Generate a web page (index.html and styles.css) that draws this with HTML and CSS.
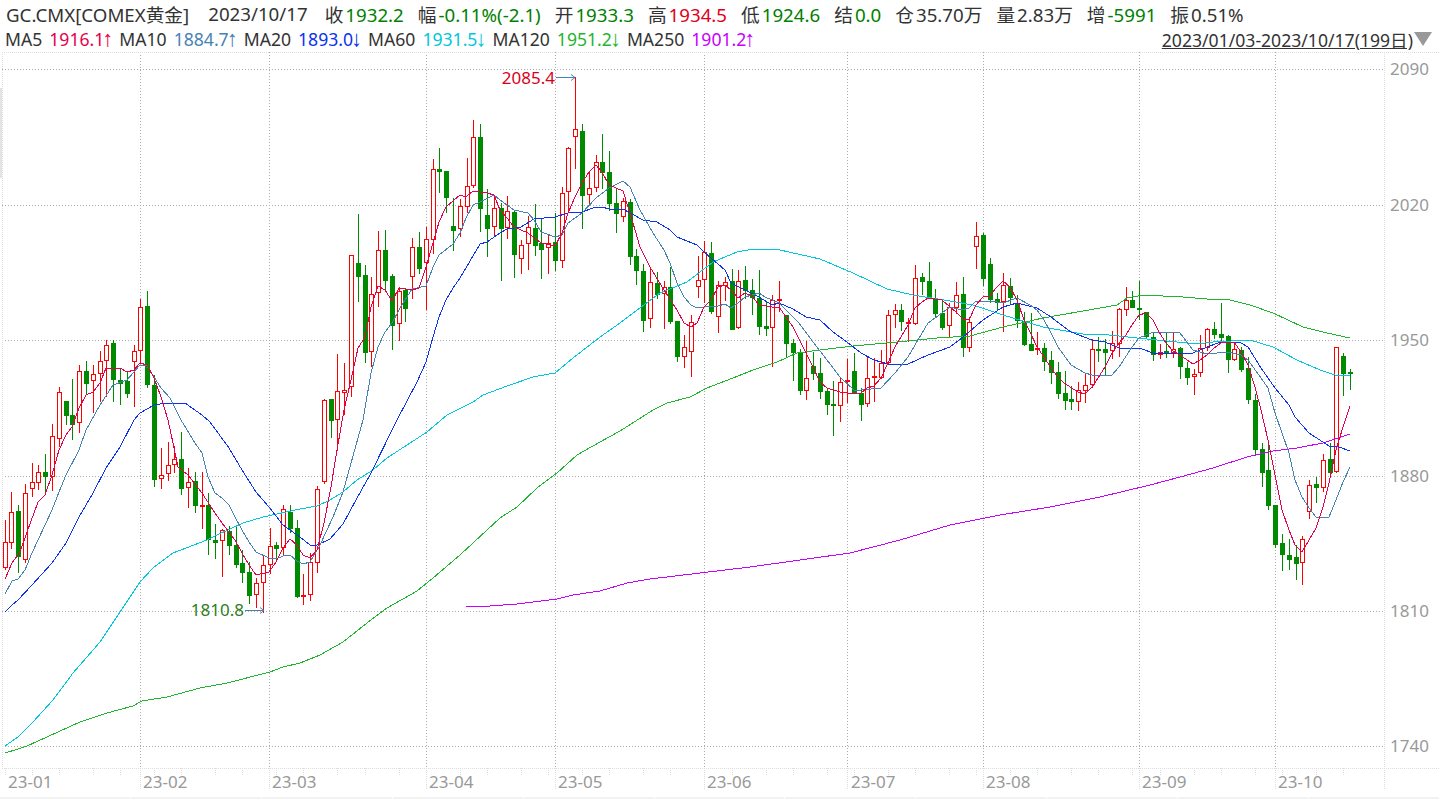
FILE: index.html
```html
<!DOCTYPE html>
<html lang="zh-CN">
<head>
    <meta charset="UTF-8">
    <title>GC.CMX COMEX黄金 日K</title>
    <link rel="stylesheet" href="styles.css">
</head>
<body>
    <div class="quote-row">
        <span class="stat-name">GC.CMX[COMEX黄金]</span>
        <span class="stat-date">2023/10/17</span>
        <span class="stat">收<span class="down">1932.2</span></span>
        <span class="stat">幅<span class="down">-0.11%(-2.1)</span></span>
        <span class="stat">开<span class="down">1933.3</span></span>
        <span class="stat">高<span class="up">1934.5</span></span>
        <span class="stat">低<span class="down">1924.6</span></span>
        <span class="stat">结<span class="down">0.0</span></span>
        <span class="stat">仓<span>35.70万</span></span>
        <span class="stat">量<span>2.83万</span></span>
        <span class="stat">增<span class="down">-5991</span></span>
        <span class="stat">振<span>0.51%</span></span>
    </div>
    <div class="ma-row">
        <span class="ma">MA5<span class="ma5">1916.1<i>↑</i></span></span>
        <span class="ma">MA10<span class="ma10">1884.7<i>↑</i></span></span>
        <span class="ma">MA20<span class="ma20">1893.0<i>↓</i></span></span>
        <span class="ma">MA60<span class="ma60">1931.5<i>↓</i></span></span>
        <span class="ma">MA120<span class="ma120">1951.2<i>↓</i></span></span>
        <span class="ma">MA250<span class="ma250">1901.2<i>↑</i></span></span>
        <span class="range">2023/01/03-2023/10/17(199日)</span>
        <span class="range-caret"></span>
    </div>

    <div class="chart-wrap">
        <div class="side-handle"></div>
        <svg id="chart" class="chart" viewBox="0 52 1439 745" width="1439" height="745">
            <g id="grid"></g>
            <g id="candles"></g>
            <g id="lines"></g>

            <text class="low-label" x="244" y="616" text-anchor="end">1810.8</text>
            <text class="high-label" x="555" y="84" text-anchor="end">2085.4</text>
            <path class="pointer" d="M245 610.5H264M260 607.5L264 610.5L260 613.5"/>
            <path class="pointer" d="M556 77.5H575M571 74.5L575 77.5L571 80.5"/>

            <text class="axis-label" x="1390" y="75">2090</text>
            <text class="axis-label" x="1390" y="211">2020</text>
            <text class="axis-label" x="1390" y="346">1950</text>
            <text class="axis-label" x="1390" y="482">1880</text>
            <text class="axis-label" x="1390" y="617">1810</text>
            <text class="axis-label" x="1390" y="752">1740</text>

            <text class="axis-label" x="8" y="788">23-01</text>
            <text class="axis-label" x="143" y="788">23-02</text>
            <text class="axis-label" x="272" y="788">23-03</text>
            <text class="axis-label" x="429" y="788">23-04</text>
            <text class="axis-label" x="558" y="788">23-05</text>
            <text class="axis-label" x="707" y="788">23-06</text>
            <text class="axis-label" x="851" y="788">23-07</text>
            <text class="axis-label" x="986" y="788">23-08</text>
            <text class="axis-label" x="1142" y="788">23-09</text>
            <text class="axis-label" x="1278" y="788">23-10</text>
        </svg>
    </div>

    <div class="foot-strip">
        <span></span><span></span><span></span><span></span><span></span><span></span><span></span><span></span><span></span><span></span><span></span>
    </div>

    <script src="app.js"></script>
</body>
</html>
```

FILE: styles.css
```css
html, body {
    margin: 0;
    padding: 0;
    overflow: hidden;
    background: #fff;
}
body {
    font-family: "Noto Sans", "Noto Sans CJK SC", sans-serif;
    color: #333;
    width: 1439px;
    height: 799px;
}

.quote-row, .ma-row {
    display: flex;
    align-items: center;
    height: 26px;
    white-space: nowrap;
}
.quote-row {
    gap: 14px;
    padding-left: 6px;
    font-size: 18.7px;
}
.ma-row {
    gap: 8px;
    padding-left: 5px;
    font-size: 17.6px;
}
.stat-date {
    margin: 0 3px 0 5px;
}
.stat span {
    margin-left: 2px;
}
.up {
    color: #e0001a;
}
.down {
    color: #008000;
}

.ma span {
    margin-left: 7px;
}
.ma i {
    display: inline-block;
    width: 7px;
    font-family: "Liberation Sans", sans-serif;
    font-size: 22px;
    font-style: normal;
    line-height: 1;
    text-indent: -2px;
}
.ma5 { color: #e6004c; }
.ma10 { color: #4682b4; }
.ma20 { color: #0a32f0; }
.ma60 { color: #00c8dc; }
.ma120 { color: #1fb52f; }
.ma250 { color: #c800ff; }

.range {
    margin-left: auto;
    text-decoration: underline;
}
.range-caret {
    width: 0;
    height: 0;
    margin: 0 7px 0 -7px;
    border-left: 9px solid transparent;
    border-right: 9px solid transparent;
    border-top: 14px solid #999;
}

.chart-wrap {
    position: relative;
    height: 745px;
}
.side-handle {
    position: absolute;
    left: 0;
    top: 36px;
    width: 2px;
    height: 90px;
    background: #e4e4e4;
}
.chart {
    display: block;
}
.chart text {
    font-family: "Noto Sans", sans-serif;
    font-size: 17px;
}
.axis-label {
    fill: #999;
}
.high-label {
    fill: #d9001b;
}
.low-label {
    fill: #2e7d1e;
}
.pointer {
    fill: none;
    stroke: #4682b4;
    stroke-width: 1;
}
.grid-line {
    stroke: #aaa;
    stroke-width: 1;
    stroke-dasharray: 1 2;
}
.frame-line {
    stroke: #ddd;
    stroke-width: 1;
    stroke-dasharray: 1 1;
}
.wick-up, .body-up {
    stroke: #f00;
    stroke-width: 1;
}
.body-up {
    fill: #fff;
}
.wick-down {
    stroke: #008a00;
    stroke-width: 1;
}
.body-down {
    fill: #008a00;
}
.ma-line {
    fill: none;
    stroke-width: 1;
    stroke-linejoin: round;
}
.line-ma5 { stroke: #e6004c; }
.line-ma10 { stroke: #4682b4; }
.line-ma20 { stroke: #0a32f0; }
.line-ma60 { stroke: #00c8dc; }
.line-ma120 { stroke: #1fb52f; }
.line-ma250 { stroke: #c800ff; }

.foot-strip {
    display: flex;
    gap: 1px;
    height: 2px;
}
.foot-strip span {
    flex: 1;
    background: #f2f2f2;
}
```

FILE: app.js
```js
const NS = 'http://www.w3.org/2000/svg';

// 蜡烛图数据: 方向(u涨 d跌), 影线上, 影线下, 实体上, 实体下 (屏幕y坐标)
const candles = [
    ['u',520,569,542,567],['u',492,548,512,542],['d',505,572,511,556],['u',484,562,493,559],['u',463,496,482,488],
    ['u',465,489,472,482],['d',454,493,472,476],['u',424,490,436,476],['u',387,446,392,438],['d',401,424,401,415],
    ['d',379,439,415,424],['u',365,432,371,422],['d',361,394,371,383],['u',365,412,374,380],['u',351,401,361,373],
    ['u',340,396,345,360],['d',340,401,343,379],['d',368,404,380,383],['d',372,397,381,393],['u',345,406,351,361],
    ['u',299,363,307,350],['d',291,387,306,384],['d',375,486,385,479],['u',448,488,475,478],['u',442,480,465,473],
    ['u',446,472,459,464],['d',432,494,459,488],['u',468,507,482,487],['d',472,512,481,505],['u',472,528,505,506],
    ['d',493,554,505,539],['d',524,558,540,542],['u',529,576,530,540],['d',526,554,531,545],['d',526,567,545,564],
    ['d',550,582,563,572],['d',562,603,572,595],['u',578,607,583,594],['u',555,612,565,582],['u',528,573,546,564],
    ['d',542,559,545,548],['u',505,554,509,547],['d',505,532,512,528],['d',520,597,528,596],['u',574,604,595,596],
    ['u',553,600,562,594],['u',486,572,489,562],['u',399,483,400,481],['d',399,437,399,420],['u',354,450,391,419],
    ['u',363,414,390,392],['u',255,396,255,386],['d',214,301,263,276],['d',265,362,275,352],['u',277,366,294,351],
    ['u',231,306,250,292],['d',230,291,250,280],['d',274,349,276,325],['u',287,340,291,323],['d',289,321,290,308],
    ['u',238,298,247,276],['d',232,273,247,268],['u',227,309,239,262],['u',159,253,169,239],['d',148,192,169,171],
    ['d',171,212,171,197],['d',198,250,226,230],['u',199,236,206,228],['u',158,212,186,206],['u',120,187,137,185],
    ['d',124,231,137,208],['d',189,256,215,228],['u',196,236,208,226],['d',203,280,208,228],['u',196,238,211,227],
    ['d',210,277,212,254],['u',240,273,245,258],['u',216,269,227,243],['d',204,255,228,245],['d',218,278,243,249],
    ['u',235,273,243,247],['d',213,270,242,260],['u',187,267,193,260],['u',147,212,148,191],['u',77,168,129,136],
    ['d',124,228,131,195],['u',172,203,188,194],['u',155,191,162,187],['d',134,188,162,172],['d',151,210,172,203],
    ['d',189,232,203,213],['u',198,221,201,216],['d',199,264,202,256],['d',249,284,256,270],['d',264,331,271,320],
    ['u',267,327,282,318],['d',272,298,283,294],['u',281,328,287,293],['d',267,323,287,321],['d',321,361,321,356],
    ['u',335,367,347,356],['u',315,376,322,351],['u',256,297,280,286],['u',241,302,252,279],['d',242,313,253,311],
    ['u',281,332,285,316],['u',277,300,282,285],['d',269,329,281,329],['u',270,328,281,327],['d',266,298,280,290],
    ['d',279,314,290,297],['d',270,334,298,326],['d',301,335,326,328],['u',295,366,300,327],['u',281,311,299,300],
    ['d',315,357,315,343],['d',339,380,343,352],['d',349,394,352,390],['u',341,399,378,390],['d',352,379,366,373],
    ['d',358,398,373,391],['d',388,414,391,404],['d',381,435,404,405],['u',378,421,382,405],['u',359,402,380,381],
    ['d',353,392,371,392],['d',388,420,393,404],['u',357,406,378,403],['u',358,401,376,377],['u',350,378,363,377],
    ['u',310,363,315,362],['u',304,327,310,314],['d',304,330,310,321],['u',318,341,322,323],['u',265,324,278,323],
    ['d',273,294,277,281],['d',262,298,281,297],['d',289,316,298,313],['d',300,329,313,327],['u',303,336,307,325],
    ['u',282,313,295,307],['d',277,356,294,347],['u',317,351,322,347],['u',222,268,236,246],['d',233,285,235,278],
    ['d',258,302,264,299],['d',293,310,299,302],['u',273,331,285,301],['d',278,303,286,297],['d',295,327,303,320],
    ['d',312,345,321,344],['d',313,350,344,350],['u',332,354,348,349],['d',343,370,348,361],['d',351,383,360,372],
    ['d',362,398,372,393],['d',371,409,393,400],['d',386,409,399,401],['u',382,410,390,401],['u',373,402,385,390],
    ['u',339,387,349,384],['d',337,361,349,350],['d',339,375,349,352],['u',331,358,343,350],['u',308,356,309,343],
    ['u',287,315,300,309],['d',291,307,300,307],['d',281,319,308,309],['d',312,337,312,336],['d',332,360,337,354],
    ['u',344,358,352,354],['d',333,357,351,353],['u',332,357,349,352],['d',347,378,348,366],['d',362,384,368,377],
    ['u',369,394,374,376],['u',335,376,348,372],['u',328,350,329,347],['d',322,338,329,334],['d',303,342,334,337],
    ['d',335,372,336,359],['u',342,360,349,359],['d',347,371,350,369],['d',357,403,368,399],['d',394,455,400,449],
    ['d',443,486,449,472],['d',443,509,470,505],['d',505,547,505,544],['d',534,570,543,554],['d',539,569,555,559],
    ['d',545,579,557,563],['u',536,584,539,562],['u',480,518,485,511],['d',477,502,484,487],['u',454,491,460,487],
    ['d',443,474,459,472],['u',347,472,347,471],['d',353,395,356,373],['d',369,389,372,373]
];

const maLines = {
    ma250: '466,607 490,606 517,604 557,599 573,595 600,591 627,583 650,579 700,573 750,567 800,560 850,553 900,540 950,525 1000,515 1050,507 1100,497 1150,485 1180,477 1213,468 1247,457 1273,451 1297,448 1323,443 1350,434',
    ma120: '5,753 18,749 27,746 80,722 107,713 133,706 142,701 167,697 200,688 227,683 270,672 283,667 300,663 320,655 343,642 367,623 387,608 417,591 433,578 460,555 500,518 517,507 537,488 557,473 577,455 600,442 620,431 653,410 667,403 690,397 707,388 733,378 753,370 777,362 797,353 820,350 853,346 897,342 937,338 970,336 1003,327 1043,318 1083,311 1117,305 1127,298 1143,295 1163,296 1183,297 1207,299 1230,300 1250,305 1273,313 1303,327 1327,333 1350,338',
    ma60: '5,746 18,737 33,722 53,700 73,673 100,642 120,612 140,582 153,568 173,553 207,540 217,535 243,523 263,517 300,509 317,506 330,500 343,492 357,480 373,470 387,458 407,445 427,432 447,415 473,402 483,395 507,386 533,377 555,373 573,358 600,337 620,323 640,308 660,293 687,282 713,262 737,252 753,249 780,250 820,259 853,273 887,289 913,295 950,301 973,305 1003,315 1043,327 1083,334 1100,334 1137,338 1167,341 1197,344 1213,342 1250,340 1273,347 1297,360 1320,370 1335,375 1350,375',
    ma20: '5,612 12,605 18,600 32,585 52,563 66,543 79,517 93,493 106,468 120,447 134,420 140,413 154,405 166,403 185,403 202,415 210,422 229,448 242,470 256,492 269,507 283,525 300,537 310,545 317,545 330,539 343,524 357,498 370,475 397,420 417,382 426,362 433,337 439,317 446,300 453,288 460,278 480,244 487,242 500,233 507,229 521,227 534,219 555,217 568,213 582,212 596,207 602,207 609,209 623,209 643,220 657,222 670,230 677,237 697,245 704,252 725,270 731,283 745,290 759,297 772,305 779,303 793,309 806,317 820,320 833,332 847,342 861,353 874,360 888,364 908,364 928,355 950,347 962,338 983,320 1003,307 1017,303 1037,308 1051,317 1071,332 1092,340 1105,342 1119,348 1139,348 1153,353 1180,354 1193,353 1207,347 1221,342 1241,343 1248,347 1261,368 1275,388 1289,405 1295,417 1309,433 1329,446 1336,446 1350,451',
    ma10: '5,594 12,581 18,579 25,570 32,553 45,525 52,510 59,492 66,475 79,450 86,430 100,405 113,385 127,380 134,372 140,365 147,366 154,377 161,388 170,398 181,420 195,443 202,453 208,477 215,493 222,498 229,505 235,517 242,530 249,542 256,552 269,558 276,559 283,556 290,555 297,561 303,564 310,562 320,545 333,517 343,492 363,420 371,373 378,347 385,332 392,323 399,310 405,300 412,289 426,286 433,267 439,255 453,244 460,233 466,218 473,205 480,202 494,195 500,200 514,210 528,213 534,220 541,232 555,237 562,235 568,223 582,213 596,198 609,188 623,181 630,187 640,210 653,233 664,250 670,263 677,283 684,297 691,305 697,308 704,307 718,306 725,304 731,308 738,303 745,297 759,293 765,297 779,303 786,310 799,323 813,342 827,360 840,377 854,390 861,390 881,388 895,373 908,357 915,345 928,323 942,313 950,307 962,310 969,308 976,301 990,301 1003,303 1017,298 1030,305 1037,310 1044,320 1051,333 1058,347 1071,365 1085,373 1092,375 1112,375 1119,367 1132,347 1139,338 1153,332 1173,332 1180,333 1193,350 1207,354 1227,352 1241,355 1248,360 1261,378 1268,388 1275,413 1282,433 1289,453 1295,480 1302,497 1309,508 1316,517 1329,517 1336,500 1343,482 1350,467',
    ma5: '5,579 12,563 20,552 27,532 38,502 45,495 52,475 59,450 66,435 72,427 79,408 86,395 93,392 100,383 106,368 120,368 127,372 134,370 140,363 147,365 154,378 161,397 168,420 173,443 178,467 188,475 202,493 213,510 222,523 235,540 242,553 249,565 256,575 269,572 276,562 283,548 290,539 297,545 303,555 310,558 317,550 324,523 331,487 337,450 344,410 351,380 358,348 365,337 371,307 378,286 385,290 392,301 399,288 412,290 419,288 426,267 433,243 439,222 446,207 460,195 466,197 473,191 487,193 494,195 500,210 507,218 514,227 528,233 541,243 555,246 562,233 568,213 575,197 582,183 589,172 596,165 602,172 609,185 623,191 633,223 640,247 650,267 664,290 677,310 684,323 691,327 697,323 704,307 711,300 718,287 725,285 731,290 738,298 745,293 752,296 759,305 772,307 779,307 786,317 793,327 806,353 813,367 820,382 827,388 840,392 847,393 861,393 867,388 874,386 881,378 888,363 895,347 901,337 908,325 915,308 922,302 928,298 942,300 950,307 956,312 962,318 969,320 976,305 983,297 990,296 996,288 1003,281 1010,287 1017,300 1024,320 1030,332 1037,347 1044,357 1051,368 1058,377 1064,383 1078,392 1085,394 1092,387 1098,378 1105,367 1112,353 1119,343 1126,335 1132,325 1139,315 1146,313 1153,320 1159,332 1166,343 1173,351 1180,355 1193,364 1200,360 1207,355 1214,348 1221,343 1234,342 1241,352 1248,365 1255,387 1261,410 1268,440 1275,475 1282,510 1289,530 1295,545 1302,552 1309,540 1316,528 1323,507 1329,483 1336,450 1343,427 1350,406'
};

function el(tag, attrs, parent) {
    const node = document.createElementNS(NS, tag);
    for (const key in attrs) node.setAttribute(key, attrs[key]);
    parent.appendChild(node);
    return node;
}

function candleX(i) {
    return Math.floor(5 + 6.795 * i);
}

function drawGrid() {
    const grid = document.getElementById('grid');
    const rows = [69, 205, 340, 476, 611, 746];
    const cols = [140, 269, 426, 555, 704, 847, 983, 1139, 1275];

    rows.forEach(y => el('path', { class: 'grid-line', d: `M2 ${y + .5}H1384` }, grid));
    cols.forEach(x => {
        el('path', { class: 'grid-line', d: `M${x + .5} 52V768` }, grid);
        el('path', { class: 'frame-line', d: `M${x + .5} 768V790` }, grid);
    });

    // 外框
    el('path', { class: 'frame-line', d: 'M2 52.5H1439' }, grid);
    el('path', { class: 'frame-line', d: 'M2 768.5H1439' }, grid);
    el('path', { class: 'frame-line', d: 'M2.5 52V768' }, grid);
    el('path', { class: 'frame-line', d: 'M1384.5 52V790' }, grid);

    // 周刻度
    for (let i = 0; i < 199; i += (i < 4 || i % 9 === 4 ? 4 : 5)) {
        const x = candleX(i) + .5;
        el('path', { class: 'frame-line', d: `M${x} 768V775` }, grid);
    }
}

function drawCandles() {
    const layer = document.getElementById('candles');
    candles.forEach((c, i) => {
        const [dir, wickTop, wickBottom, bodyTop, bodyBottom] = c;
        const x = candleX(i);
        el('path', { class: 'wick-' + (dir === 'u' ? 'up' : 'down'), d: `M${x + .5} ${wickTop}V${wickBottom + 1}`, 'shape-rendering': 'crispEdges' }, layer);
        if (dir === 'u') {
            el('rect', { class: 'body-up', x: x - 1.5, y: bodyTop + .5, width: 4, height: Math.max(bodyBottom - bodyTop, 1), 'shape-rendering': 'crispEdges' }, layer);
        } else {
            el('rect', { class: 'body-down', x: x - 2, y: bodyTop, width: 5, height: Math.max(bodyBottom - bodyTop + 1, 2), 'shape-rendering': 'crispEdges' }, layer);
        }
    });
}

function drawLines() {
    const layer = document.getElementById('lines');
    for (const name in maLines) {
        el('polyline', { class: 'ma-line line-' + name, points: maLines[name], 'shape-rendering': 'crispEdges' }, layer);
    }
}

drawGrid();
drawCandles();
drawLines();
```
